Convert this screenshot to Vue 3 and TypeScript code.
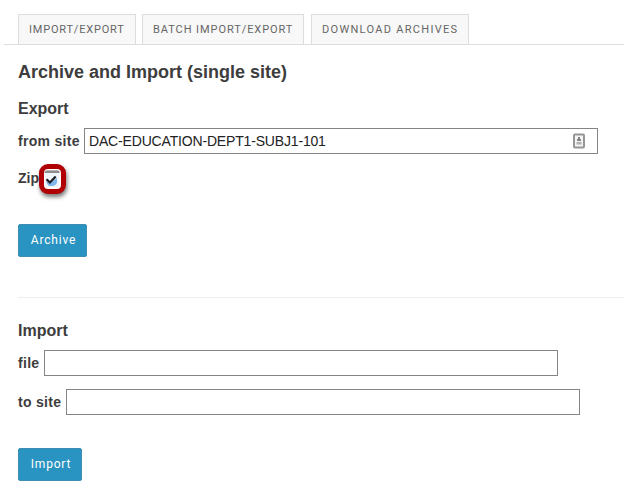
<script setup lang="ts">
import { ref } from 'vue'

const tabs: string[] = ['Import/Export', 'Batch Import/Export', 'Download Archives']
const source = ref('DAC-EDUCATION-DEPT1-SUBJ1-101')
const file = ref('')
const target = ref('')
const zip = ref(true)
</script>

<template>
  <main class="page">
    <nav class="tabs">
      <a v-for="(tab, i) in tabs" :key="tab" class="tab" :class="`tab-${i}`">{{ tab }}</a>
    </nav>
    <div class="content">
      <h1>Archive and Import (single site)</h1>
      <section class="export">
        <h2>Export</h2>
        <div class="row">
          <label class="from" for="source">from site</label>
          <div class="field">
            <input id="source" v-model="source" type="text" />
            <svg class="card" width="12" height="16" viewBox="0 0 12 16">
              <rect x="1" y="1.5" width="10" height="13" rx="1" fill="#f5f5f5" stroke="#969696" stroke-width="2" />
              <path d="M5 4h2v2h1v2H4V6h1z" fill="#858585" />
              <path d="M3.5 9h5v2.5h-5z" fill="#b0b0b0" />
            </svg>
          </div>
        </div>
        <div class="row zip-row">
          <label class="zip">Zip</label>
          <button class="check" type="button" role="checkbox" :aria-checked="zip" @click="zip = !zip">
            <svg width="17" height="20" viewBox="0 0 17 20">
              <path d="M0 4Q1 1 4 1h9q2 0 3 2v1z" fill="#b5b5b5" />
              <path d="M1 3h14" stroke="#666" stroke-width="1" />
              <rect x="1" y="4" width="14" height="14" rx="2" fill="#f1f6fc" />
              <path d="M2 12l4 2 7-5v5q-2 3-4 3H5q-2-1-3-5z" fill="#80b6e8" />
              <path v-if="zip" d="M2.5 10.3l3.4 3.2 5.8-6" fill="none" stroke="#171b22" stroke-width="2.2" />
            </svg>
          </button>
        </div>
        <button class="action archive" type="button">Archive</button>
      </section>
      <section class="import">
        <h2>Import</h2>
        <div class="row">
          <label class="file" for="file">file</label>
          <div class="field"><input id="file" v-model="file" type="text" /></div>
        </div>
        <div class="row second">
          <label class="to" for="target">to site</label>
          <div class="field"><input id="target" v-model="target" type="text" /></div>
        </div>
        <button class="action import-button" type="button">Import</button>
      </section>
    </div>
  </main>
</template>

<style>
body {
  background: #fff;
}
</style>

<style scoped>
* {
  box-sizing: border-box;
}
.page {
  height: 503px;
  padding: 14px 0 0 4px;
  overflow: hidden;
  color: #3d3d3d;
  font-family: "Liberation Sans", Arial, sans-serif;
}
.tabs {
  display: flex;
  height: 31px;
  padding-left: 14px;
  border-bottom: 1px solid #ddd;
}
.tab {
  height: 30px;
  padding-left: 10px;
  border: 1px solid #ddd;
  border-bottom: 0;
  background: #f8f8f8;
  color: #666;
  font: 11px/29px Roboto, sans-serif;
  letter-spacing: 1.3px;
  text-transform: uppercase;
  white-space: nowrap;
}
.tab-0 {
  width: 118px;
  margin-right: 6px;
  letter-spacing: 0.8px;
}
.tab-1 {
  width: 162px;
  margin-right: 7px;
  letter-spacing: 0.93px;
}
.tab-2 {
  width: 158px;
}
.content {
  padding: 16px 0 0 14px;
}
h1,
h2 {
  margin: 0;
  font-weight: bold;
}
h1 {
  font-size: 18px;
  line-height: 22px;
}
h2 {
  font-size: 16px;
  line-height: 20px;
}
.export {
  height: 215px;
  padding-top: 16px;
  border-bottom: 1px solid #eee;
}
.row {
  display: flex;
  height: 26px;
  margin-top: 9px;
  align-items: center;
}
label {
  flex: none;
  font-size: 14px;
  font-weight: bold;
  letter-spacing: 0.3px;
  line-height: 26px;
  white-space: nowrap;
}
.from {
  width: 66px;
}
.file {
  width: 26px;
}
.to {
  width: 48px;
}
.zip {
  width: 21px;
  padding-bottom: 2px;
  letter-spacing: 0;
}
.field {
  display: flex;
  width: 514px;
  height: 26px;
  padding: 0 12px 0 4px;
  align-items: center;
  border: 1px solid #858585;
}
input {
  flex: 1;
  min-width: 0;
  height: 24px;
  padding: 0;
  border: 0;
  outline: 0;
  background: transparent;
  color: #222;
  font: 14px "Liberation Sans", Arial, sans-serif;
  letter-spacing: -0.17px;
}
.card {
  flex: none;
}
.zip-row {
  height: 30px;
  margin-top: 10px;
}
.check {
  display: flex;
  flex: none;
  width: 27px;
  height: 30px;
  padding: 0;
  align-items: center;
  justify-content: center;
  border: 5px solid #b00005;
  border-radius: 9px;
  background: #fff;
  box-shadow: 1px 3px 4px #0008;
}
.check svg {
  flex: none;
}
.action {
  display: block;
  height: 33px;
  padding: 0 0 1px 2px;
  border: 1px solid #3f8fb4;
  border-radius: 2px;
  background: #2993c1;
  color: #fff;
  font: 12px Roboto, sans-serif;
  letter-spacing: 0.8px;
}
.archive {
  width: 69px;
  margin-top: 30px;
}
.import {
  padding-top: 23px;
}
.import-button {
  width: 64px;
  margin-top: 33px;
}
.second {
  margin-top: 13px;
}
</style>
